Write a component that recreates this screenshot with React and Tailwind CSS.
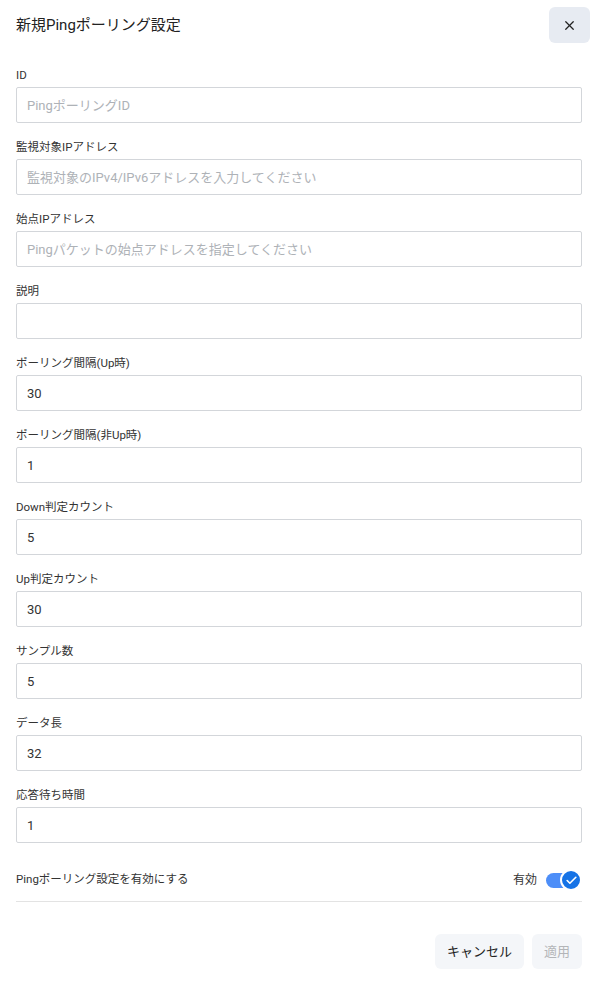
import { X, Check } from "lucide-react";

const fields = [
  { label: "ID", placeholder: "PingポーリングID" },
  { label: "監視対象IPアドレス", placeholder: "監視対象のIPv4/IPv6アドレスを入力してください" },
  { label: "始点IPアドレス", placeholder: "Pingパケットの始点アドレスを指定してください" },
  { label: "説明", value: "" },
  { label: "ポーリング間隔(Up時)", value: "30" },
  { label: "ポーリング間隔(非Up時)", value: "1" },
  { label: "Down判定カウント", value: "5" },
  { label: "Up判定カウント", value: "30" },
  { label: "サンプル数", value: "5" },
  { label: "データ長", value: "32" },
  { label: "応答待ち時間", value: "1" },
];

export default function App() {
  return (
    <div
      className="w-[597px] h-[984px] bg-white text-[#202124] overflow-hidden"
      style={{ fontFamily: "Roboto, 'Noto Sans CJK JP', sans-serif" }}
    >
      <header className="flex items-center justify-between pl-4 pr-[7px] pt-[7px]">
        <h1 className="text-[15px] leading-[36px] text-[#222]">新規Pingポーリング設定</h1>
        <button className="w-[41px] h-[36px] rounded-md bg-[#e7ebf2] flex items-center justify-center text-[#222]">
          <X size={15} strokeWidth={2} />
        </button>
      </header>

      <form className="pl-4 pr-[15px] pt-[24px]">
        {fields.map((f) => (
          <div key={f.label} className="mb-4">
            <label className="block text-[11.5px] leading-4 text-[#333] mb-1">{f.label}</label>
            <input
              type="text"
              defaultValue={f.value}
              placeholder={f.placeholder}
              className="w-full h-[36px] border border-[#d3d6da] rounded-[2px] px-[10px] text-[13px] text-[#333] placeholder:text-[#aeb2b7] outline-none"
            />
          </div>
        ))}

        <div className="flex items-center justify-between h-[22px] mt-[26px] border-b border-[#e3e3e3] pb-[10px] box-content">
          <span className="text-[11.5px] text-[#333]">Pingポーリング設定を有効にする</span>
          <div className="flex items-center gap-[9px]">
            <span className="text-[12px] text-[#333]">有効</span>
            <div className="relative w-[36px] h-[22px] flex items-center">
              <div className="w-[30px] h-[15px] rounded-full bg-[#4d8ef8]" />
              <div className="absolute right-0 top-0 w-[22px] h-[22px] rounded-full bg-[#1673e6] border-2 border-white flex items-center justify-center text-white">
                <Check size={13} strokeWidth={3} />
              </div>
            </div>
          </div>
        </div>

        <div className="flex justify-end gap-[8px] mt-[32px]">
          <button type="button" className="h-[35px] w-[89px] rounded-md bg-[#f4f6f9] text-[13px] text-[#222]">
            キャンセル
          </button>
          <button type="button" className="h-[35px] w-[50px] rounded-md bg-[#f4f6f9] text-[13px] text-[#b3b5b8]">
            適用
          </button>
        </div>
      </form>
    </div>
  );
}
